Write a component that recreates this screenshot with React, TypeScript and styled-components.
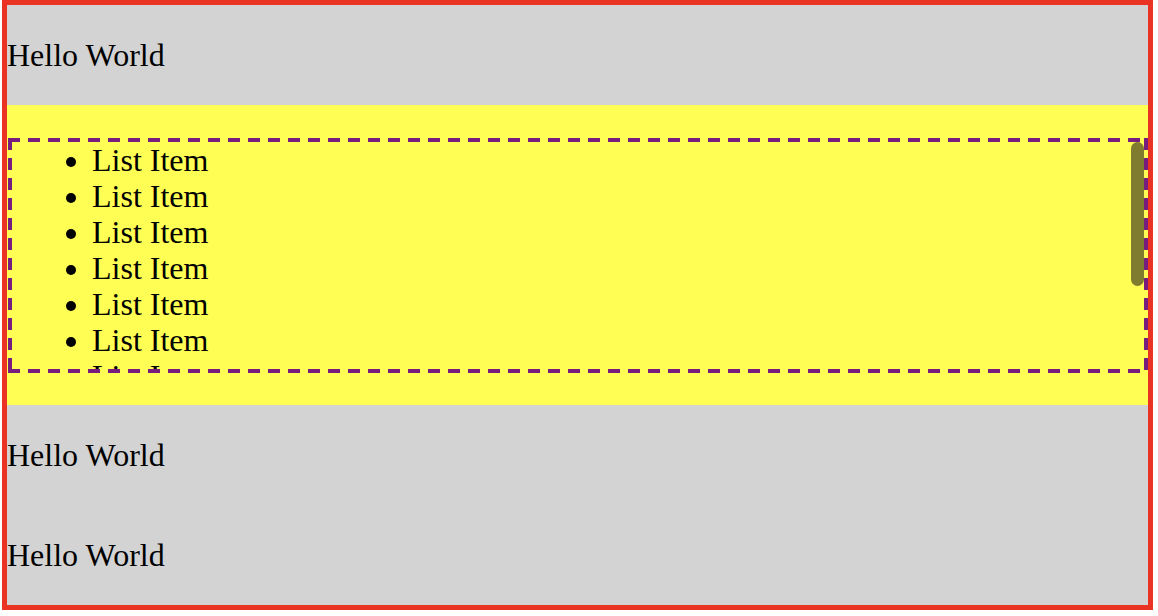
import * as React from 'react';
import styled, { createGlobalStyle } from 'styled-components';

const GlobalStyle = createGlobalStyle`
  html, body {
    margin: 0;
    padding: 0;
    background: #ffffff;
  }
  body {
    font-family: "Liberation Serif", "Times New Roman", serif;
  }
`;

const purple = '#781d7e';

const Frame = styled.div`
  box-sizing: content-box;
  width: 1141px;
  margin-left: 2px;
  border: 5px solid #eb3323;
  display: flex;
  flex-direction: column;
`;

const GreyRow = styled.div`
  height: 100px;
  background: #d3d3d3;
  display: flex;
  align-items: center;
  font-size: 32px;
  color: #000;
`;

const YellowSection = styled.div`
  height: 300px;
  background: #fffe54;
  display: flex;
  align-items: center;
`;

// dashed edge drawn with gradients so the dash length matches (12 on, 8 off)
const DashedFrame = styled.div`
  position: relative;
  box-sizing: border-box;
  width: 100%;
  height: 235px;
  margin-left: 1px;
  padding: 4px;
  background:
    repeating-linear-gradient(90deg, ${purple} 0 12px, transparent 12px 20px) top left / 100% 4px no-repeat,
    repeating-linear-gradient(90deg, ${purple} 0 12px, transparent 12px 20px) bottom left / 100% 4px no-repeat,
    repeating-linear-gradient(180deg, ${purple} 0 12px, transparent 12px 20px) top left / 4px 100% no-repeat,
    repeating-linear-gradient(180deg, ${purple} 0 12px, transparent 12px 20px) top right / 4px 100% no-repeat;
`;

const List = styled.ul`
  box-sizing: border-box;
  height: 100%;
  margin: 0;
  padding: 0 0 0 80px;
  overflow-y: auto;
  scrollbar-width: none;
  font-size: 32px;
  line-height: 36px;
  color: #000;

  &::-webkit-scrollbar {
    display: none;
  }
`;

const Item = styled.li`
  list-style: disc;
`;

const ScrollThumb = styled.div`
  position: absolute;
  top: 4px;
  right: 4px;
  width: 13px;
  height: 144px;
  border-radius: 7px;
  background: #7f7b2f;
`;

const items = Array.from({ length: 10 }, (_, i) => i);

const App: React.FC = () => {
  return (
    <>
      <GlobalStyle />
      <Frame>
        <GreyRow>Hello World</GreyRow>
        <YellowSection>
          <DashedFrame>
            <List>
              {items.map((i) => (
                <Item key={i}>List Item</Item>
              ))}
            </List>
            <ScrollThumb />
          </DashedFrame>
        </YellowSection>
        <GreyRow>Hello World</GreyRow>
        <GreyRow>Hello World</GreyRow>
      </Frame>
    </>
  );
};

export default App;
